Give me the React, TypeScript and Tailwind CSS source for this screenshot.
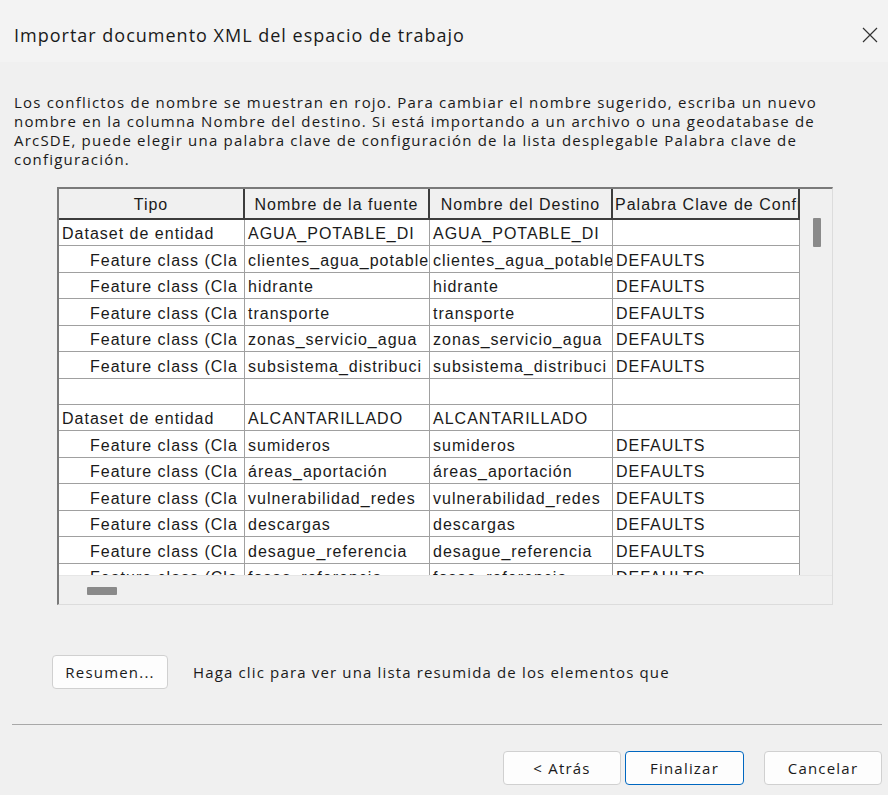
type Row = { tipo: string; fuente: string; destino: string; clave: string; child?: boolean };

const rows: Row[] = [
  { tipo: "Dataset de entidad", fuente: "AGUA_POTABLE_DI", destino: "AGUA_POTABLE_DI", clave: "" },
  { tipo: "Feature class (Cla", fuente: "clientes_agua_potable", destino: "clientes_agua_potable", clave: "DEFAULTS", child: true },
  { tipo: "Feature class (Cla", fuente: "hidrante", destino: "hidrante", clave: "DEFAULTS", child: true },
  { tipo: "Feature class (Cla", fuente: "transporte", destino: "transporte", clave: "DEFAULTS", child: true },
  { tipo: "Feature class (Cla", fuente: "zonas_servicio_agua", destino: "zonas_servicio_agua", clave: "DEFAULTS", child: true },
  { tipo: "Feature class (Cla", fuente: "subsistema_distribuci", destino: "subsistema_distribuci", clave: "DEFAULTS", child: true },
  { tipo: "", fuente: "", destino: "", clave: "" },
  { tipo: "Dataset de entidad", fuente: "ALCANTARILLADO", destino: "ALCANTARILLADO", clave: "" },
  { tipo: "Feature class (Cla", fuente: "sumideros", destino: "sumideros", clave: "DEFAULTS", child: true },
  { tipo: "Feature class (Cla", fuente: "áreas_aportación", destino: "áreas_aportación", clave: "DEFAULTS", child: true },
  { tipo: "Feature class (Cla", fuente: "vulnerabilidad_redes", destino: "vulnerabilidad_redes", clave: "DEFAULTS", child: true },
  { tipo: "Feature class (Cla", fuente: "descargas", destino: "descargas", clave: "DEFAULTS", child: true },
  { tipo: "Feature class (Cla", fuente: "desague_referencia", destino: "desague_referencia", clave: "DEFAULTS", child: true },
  { tipo: "Feature class (Cla", fuente: "fosas_referencia", destino: "fosas_referencia", clave: "DEFAULTS", child: true },
];

// row pitch is ~26.5px, so rows alternate between 26 and 27
const rowHeights = ["h-[26px]", "h-[27px]", "h-[26px]", "h-[27px]", "h-[26px]", "h-[27px]", "h-[26px]", "h-[26px]", "h-[27px]", "h-[26px]", "h-[27px]", "h-[26px]", "h-[27px]", "h-[26px]"];

const ui = "font-['Open_Sans',sans-serif] text-[#1a1a1a]";
const grid = "font-['Liberation_Sans',Arial,sans-serif] text-[16px] tracking-[1px] text-[#1a1a1a]";

function HeaderCell({ children, left }: { children: string; left?: boolean }) {
  return (
    <div
      className={`h-[31px] flex items-center pt-[2px] overflow-hidden whitespace-nowrap bg-[#f0f0f0] border-r-2 border-b-2 border-[#3c3c3c] ${
        left ? "pl-[2px]" : "justify-center"
      }`}
    >
      {children}
    </div>
  );
}

function Cell({ children, indent, h }: { children: string; indent?: boolean; h: string }) {
  return (
    <div
      className={`${h} flex items-center pt-[3px] overflow-hidden whitespace-nowrap bg-white border-r border-b border-[#a0a0a0] ${
        indent ? "pl-[31px]" : "pl-[3px]"
      }`}
    >
      {children}
    </div>
  );
}

function Button({ children, primary, className = "" }: { children: string; primary?: boolean; className?: string }) {
  return (
    <button
      className={`h-[34px] rounded-[4px] bg-[#fdfdfd] text-[15px] tracking-[1.2px] ${ui} ${
        primary ? "border border-[#0067c0]" : "border border-[#d0d0d0]"
      } ${className}`}
    >
      {children}
    </button>
  );
}

export default function App() {
  return (
    <div className={`w-[888px] h-[795px] bg-[#f0f0f0] flex flex-col ${ui}`}>
      {/* title bar */}
      <div className="h-[62px] flex items-start justify-between pl-[14px] pr-[10px] pt-[23px] bg-[#f3f3f3]">
        <span className="text-[18px] tracking-[1px] leading-[24px]">Importar documento XML del espacio de trabajo</span>
        <svg className="mt-[4px]" width="16" height="16" viewBox="0 0 16 16" fill="none" stroke="#333" strokeWidth="1.2">
          <path d="M1 1l14 14M15 1L1 15" />
        </svg>
      </div>

      <p className="px-[14px] pt-[31px] text-[15px] tracking-[1.2px] leading-[19px]">
        Los conflictos de nombre se muestran en rojo. Para cambiar el nombre sugerido, escriba un nuevo
        <br />
        nombre en la columna Nombre del destino. Si está importando a un archivo o una geodatabase de
        <br />
        ArcSDE, puede elegir una palabra clave de configuración de la lista desplegable Palabra clave de
        <br />
        configuración.
      </p>

      {/* grid with scroll bars */}
      <div className="ml-[57px] mt-[18px] w-[776px] h-[418px] flex flex-col border-t-2 border-l-2 border-[#7a7a7a] border-r border-b border-r-[#dcdcdc] border-b-[#dcdcdc]">
        <div className="flex h-[386px]">
          <div className={`w-[741px] overflow-hidden grid grid-cols-[186px_185px_183px_187px] content-start ${grid}`}>
            <HeaderCell>Tipo</HeaderCell>
            <HeaderCell>Nombre de la fuente</HeaderCell>
            <HeaderCell>Nombre del Destino</HeaderCell>
            <HeaderCell left>Palabra Clave de Configuración</HeaderCell>
            {rows.map((r, i) => [
              <Cell key={`t${i}`} h={rowHeights[i]} indent={r.child}>{r.tipo}</Cell>,
              <Cell key={`f${i}`} h={rowHeights[i]}>{r.fuente}</Cell>,
              <Cell key={`d${i}`} h={rowHeights[i]}>{r.destino}</Cell>,
              <Cell key={`c${i}`} h={rowHeights[i]}>{r.clave}</Cell>,
            ])}
          </div>
          <div className="flex-1 pt-[29px] pl-[13px]">
            <div className="w-[8px] h-[29px] bg-[#8a8a8a] rounded-[1px]" />
          </div>
        </div>
        <div className="flex-1 flex items-center pt-[2px] pl-[28px] border-t border-[#e6e6e6]">
          <div className="w-[30px] h-[8px] bg-[#8a8a8a] rounded-[1px]" />
        </div>
      </div>

      <div className="flex items-center mt-[50px] pl-[52px]">
        <Button className="w-[116px]">Resumen...</Button>
        <span className="ml-[25px] text-[15px] tracking-[1.15px]">Haga clic para ver una lista resumida de los elementos que</span>
      </div>

      <div className="mt-[35px] ml-[12px] mr-[6px] h-px bg-[#a8a8a8]" />

      <div className="flex justify-end gap-[4px] pr-[6px] mt-[26px]">
        <Button className="w-[118px]">{"< Atrás"}</Button>
        <Button primary className="w-[119px]">Finalizar</Button>
        <Button className="w-[118px] ml-[16px]">Cancelar</Button>
      </div>
    </div>
  );
}
